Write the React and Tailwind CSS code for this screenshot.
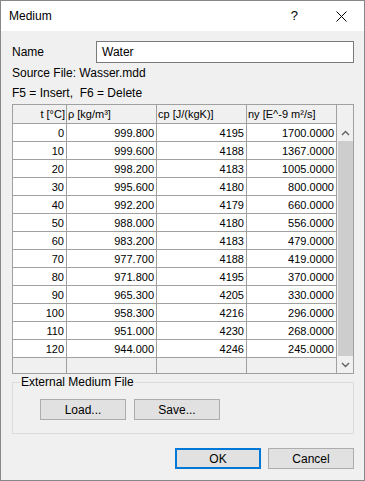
const ROWS = [
  ['0', '999.800', '4195', '1700.0000'],
  ['10', '999.600', '4188', '1367.0000'],
  ['20', '998.200', '4183', '1005.0000'],
  ['30', '995.600', '4180', '800.0000'],
  ['40', '992.200', '4179', '660.0000'],
  ['50', '988.000', '4180', '556.0000'],
  ['60', '983.200', '4183', '479.0000'],
  ['70', '977.700', '4188', '419.0000'],
  ['80', '971.800', '4195', '370.0000'],
  ['90', '965.300', '4205', '330.0000'],
  ['100', '958.300', '4216', '296.0000'],
  ['110', '951.000', '4230', '268.0000'],
  ['120', '944.000', '4246', '245.0000'],
]

const COLS = ['w-[54px]', 'w-[90px]', 'w-[90px]', 'w-[90px]']

function Button({ children, primary }) {
  return (
    <button
      className={`flex h-[21px] w-[86px] items-center justify-center bg-[#e1e1e1] text-[12px] leading-none text-black ${
        primary ? 'border-2 border-[#0078d7]' : 'border border-[#adadad]'
      }`}
    >
      {children}
    </button>
  )
}

function Chevron({ up }) {
  return (
    <svg width="9" height="6" viewBox="0 0 9 6" aria-hidden>
      <polyline
        points={up ? '1,5 4.5,1.5 8,5' : '1,1 4.5,4.5 8,1'}
        fill="none"
        stroke="#606060"
        strokeWidth="1.4"
      />
    </svg>
  )
}

function CloseIcon() {
  return (
    <svg width="11" height="11" viewBox="0 0 11 11" aria-hidden>
      <path d="M0.5 0.5 L10.5 10.5 M10.5 0.5 L0.5 10.5" stroke="#000" strokeWidth="1" fill="none" />
    </svg>
  )
}

export default function App() {
  return (
    <div className="flex h-[481px] w-[365px] flex-col border border-[#888888] bg-[#f0f0f0] font-['Liberation_Sans',Arial,sans-serif] text-black">
      {/* title bar */}
      <div className="flex h-[30px] items-center bg-white pl-[8px]">
        <span className="flex-1 text-[12px]">Medium</span>
        <span className="mr-[38px] text-[13px]">?</span>
        <span className="mr-[17px] flex">
          <CloseIcon />
        </span>
      </div>

      <div className="flex flex-col pl-[11px] pr-[10px] text-[12px]">
        {/* name */}
        <div className="mt-[10px] flex h-[22px] items-center">
          <span className="w-[84px]">Name</span>
          <div className="flex h-[22px] flex-1 items-center border border-[#7a7a7a] bg-white pl-[5px]">
            Water
          </div>
        </div>
        <div className="flex h-[20px] items-center">Source File: Wasser.mdd</div>
        <div className="flex h-[20px] items-center whitespace-pre">F5 = Insert,  F6 = Delete</div>

        {/* grid */}
        <div className="mt-[1px] flex h-[270px] w-[342px] border border-[#a0a0a0] text-[11px]">
          <div className="flex w-[324px] flex-col">
            <div className="flex h-[19px] border-b border-[#a0a0a0] bg-[#f0f0f0]">
              <div className={`${COLS[0]} border-r border-[#a0a0a0] pr-[1px] pt-[2px] text-right leading-[15px]`}>t [°C]</div>
              <div className={`${COLS[1]} border-r border-[#a0a0a0] pl-[1px] pt-[2px] leading-[15px]`}>ρ [kg/m³]</div>
              <div className={`${COLS[2]} border-r border-[#a0a0a0] pl-[1px] pt-[2px] leading-[15px]`}>cp [J/(kgK)]</div>
              <div className={`${COLS[3]} border-r border-[#a0a0a0] pl-[1px] pt-[2px] leading-[15px] whitespace-nowrap`}>ny [E^-9 m²/s]</div>
            </div>
            {ROWS.map((r) => (
              <div key={r[0]} className="flex h-[18px] border-b border-[#a0a0a0] bg-white">
                {r.map((v, i) => (
                  <div key={i} className={`${COLS[i]} border-r border-[#a0a0a0] pr-[2px] pt-[2px] text-right leading-[15px]`}>
                    {v}
                  </div>
                ))}
              </div>
            ))}
            <div className="flex flex-1 bg-[#f0f0f0]">
              {COLS.map((c, i) => (
                <div key={i} className={`${c} border-r border-[#a0a0a0]`} />
              ))}
            </div>
          </div>

          {/* scrollbar */}
          <div className="flex w-[16px] flex-col bg-[#f0f0f0]">
            <div className="h-[19px]" />
            <div className="flex h-[17px] items-center justify-center">
              <Chevron up />
            </div>
            <div className="ml-[1px] flex-1 bg-[#cdcdcd]" />
            <div className="flex h-[17px] items-center justify-center">
              <Chevron />
            </div>
          </div>
        </div>

        {/* group box */}
        <div className="relative mt-[8px] h-[52px] w-[342px] border border-[#dcdcdc]">
          <span className="absolute left-[7px] top-[-7px] bg-[#f0f0f0] px-[1px] text-[12px] leading-[13px]">
            External Medium File
          </span>
          <div className="flex gap-[8px] pl-[27px] pt-[16px]">
            <Button>Load...</Button>
            <Button>Save...</Button>
          </div>
        </div>

        <div className="mt-[14px] flex justify-end gap-[7px]">
          <Button primary>OK</Button>
          <Button>Cancel</Button>
        </div>
      </div>
    </div>
  )
}
